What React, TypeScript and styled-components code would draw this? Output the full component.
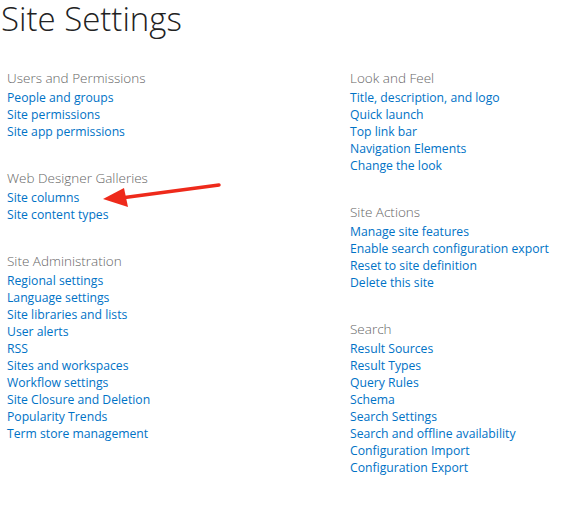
import React from 'react';
import styled, { createGlobalStyle } from 'styled-components';

type Section = { title: string; links: string[] };

const leftSections: Section[] = [
  {
    title: 'Users and Permissions',
    links: ['People and groups', 'Site permissions', 'Site app permissions'],
  },
  {
    title: 'Web Designer Galleries',
    links: ['Site columns', 'Site content types'],
  },
  {
    title: 'Site Administration',
    links: [
      'Regional settings',
      'Language settings',
      'Site libraries and lists',
      'User alerts',
      'RSS',
      'Sites and workspaces',
      'Workflow settings',
      'Site Closure and Deletion',
      'Popularity Trends',
      'Term store management',
    ],
  },
];

const rightSections: Section[] = [
  {
    title: 'Look and Feel',
    links: [
      'Title, description, and logo',
      'Quick launch',
      'Top link bar',
      'Navigation Elements',
      'Change the look',
    ],
  },
  {
    title: 'Site Actions',
    links: [
      'Manage site features',
      'Enable search configuration export',
      'Reset to site definition',
      'Delete this site',
    ],
  },
  {
    title: 'Search',
    links: [
      'Result Sources',
      'Result Types',
      'Query Rules',
      'Schema',
      'Search Settings',
      'Search and offline availability',
      'Configuration Import',
      'Configuration Export',
    ],
  },
];

const renderSection = (section: Section) => (
  <Group key={section.title}>
    <GroupTitle>{section.title}</GroupTitle>
    {section.links.map((link) => (
      <LinkItem key={link} href="#">
        {link}
      </LinkItem>
    ))}
  </Group>
);

const App = () => (
  <>
    <GlobalStyle />
    <Page>
      <PageTitle>Site Settings</PageTitle>
      <Columns>
        <Column>
          {leftSections.map(renderSection)}
          <Arrow width="120" height="30" viewBox="0 0 120 30">
            <line x1="116" y1="4" x2="18" y2="17" stroke="#ee2a1b" strokeWidth="3.5" strokeLinecap="round" />
            <polygon points="0,18 21,7 25,26" fill="#ee2a1b" />
          </Arrow>
        </Column>
        <Column>{rightSections.map(renderSection)}</Column>
      </Columns>
    </Page>
  </>
);

const GlobalStyle = createGlobalStyle`
  body {
    margin: 0;
    background: #ffffff;
    font-family: 'Open Sans', 'Noto Sans', sans-serif;
  }
`;

const Page = styled.div`
  padding: 0 0 20px 0;
`;

const PageTitle = styled.h1`
  margin: 0;
  padding-left: 1px;
  font-family: 'Open Sans', sans-serif;
  font-weight: 300;
  font-size: 33px;
  line-height: 37px;
  color: #222222;
`;

const Columns = styled.div`
  display: grid;
  grid-template-columns: 343px 1fr;
  padding: 32px 0 0 7px;
`;

const Column = styled.div`
  position: relative;
  display: flex;
  flex-direction: column;
  gap: 29px;
`;

const Group = styled.div`
  display: flex;
  flex-direction: column;
`;

const GroupTitle = styled.div`
  font-size: 13.5px;
  font-weight: 300;
  line-height: 19px;
  margin-bottom: 1px;
  color: #666666;
`;

const LinkItem = styled.a`
  font-size: 12.2px;
  line-height: 17px;
  color: #0072c6;
  text-decoration: none;
  white-space: nowrap;
`;

const Arrow = styled.svg`
  position: absolute;
  left: 96px;
  top: 112px;
`;

export default App;
